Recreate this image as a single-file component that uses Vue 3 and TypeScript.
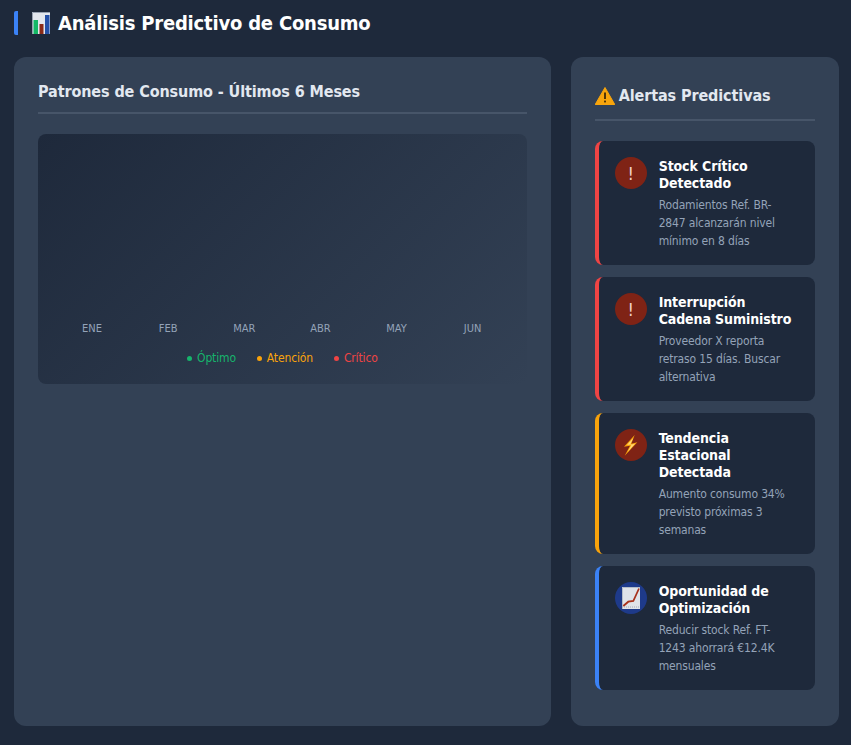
<script setup lang="ts">
interface Alert { title: string; desc: string; tone: 'crit' | 'warn' | 'info'; icon: 'bang' | 'bolt' | 'trend' }
const months: string[] = ['ENE', 'FEB', 'MAR', 'ABR', 'MAY', 'JUN']
const alerts: Alert[] = [
  { title: 'Stock Crítico Detectado', desc: 'Rodamientos Ref. BR-2847 alcanzarán nivel mínimo en 8 días', tone: 'crit', icon: 'bang' },
  { title: 'Interrupción Cadena Suministro', desc: 'Proveedor X reporta retraso 15 días. Buscar alternativa', tone: 'crit', icon: 'bang' },
  { title: 'Tendencia Estacional Detectada', desc: 'Aumento consumo 34% previsto próximas 3 semanas', tone: 'warn', icon: 'bolt' },
  { title: 'Oportunidad de Optimización', desc: 'Reducir stock Ref. FT-1243 ahorrará €12.4K mensuales', tone: 'info', icon: 'trend' },
]
</script>

<template>
  <div class="page">
    <h1 class="head">
      <svg class="emoji-chart" width="18" height="22" viewBox="0 0 18 22">
        <rect width="18" height="22" fill="#e3e7ee" />
        <path d="M.5 22V.5H18" fill="none" stroke="#98a2b2" />
        <rect x="1.5" y="8" width="4.5" height="14" fill="#14b866" />
        <rect x="7.5" y="12" width="4" height="10" fill="#8a2a17" />
        <rect x="13" y="3" width="4.5" height="19" fill="#2450a8" />
      </svg>
      <span>Análisis Predictivo de Consumo</span>
    </h1>
    <main class="grid">
      <section class="card">
        <h2 class="title">Patrones de Consumo - Últimos 6 Meses</h2>
        <div class="chart">
          <div class="months"><span v-for="m in months" :key="m">{{ m }}</span></div>
          <div class="legend">
            <span class="ok">Óptimo</span>
            <span class="att">Atención</span>
            <span class="bad">Crítico</span>
          </div>
        </div>
      </section>
      <aside class="card side">
        <h2 class="title alerts-title">
          <svg width="20" height="18" viewBox="0 0 20 18">
            <path d="M10 .5 19.8 17.5H.2Z" fill="#f8a50c" stroke="#f8a50c" stroke-linejoin="round" />
            <rect x="9.2" y="5.5" width="1.6" height="6.5" fill="#2a1c05" />
            <rect x="9.2" y="13.6" width="1.6" height="1.8" fill="#2a1c05" />
          </svg>
          <span>Alertas Predictivas</span>
        </h2>
        <div class="list">
          <article v-for="a in alerts" :key="a.title" class="alert" :class="a.tone">
            <div class="icon">
              <span v-if="a.icon === 'bang'">!</span>
              <svg v-else-if="a.icon === 'bolt'" width="14" height="21" viewBox="0 0 14 21">
                <path d="M10.7 0 0 11.7 6 10.7.7 20.7 13.3 7.3 7.3 8.7Z" fill="#f8a50c" />
                <path d="M9.2 3 3 10 7.8 9.3 3.6 17 11 8.8 6 10Z" fill="#ffd97a" />
              </svg>
              <svg v-else width="18" height="22" viewBox="0 0 18 22">
                <rect width="18" height="22" fill="#dfe3e9" />
                <path d="M.5 22V.5H18" fill="none" stroke="#b4bcc8" />
                <path d="M0 20H18" stroke="#a4acb9" stroke-dasharray="1 1" />
                <path d="M1.3 19 6.3 14.7 11.3 14 17 1.5" fill="none" stroke="#a8321c" stroke-width="1.8" />
              </svg>
            </div>
            <div class="body">
              <h3>{{ a.title }}</h3>
              <p>{{ a.desc }}</p>
            </div>
          </article>
        </div>
      </aside>
    </main>
  </div>
</template>

<style>
body { background: #1e293b; }
</style>

<style scoped>
.page {
  box-sizing: border-box;
  height: 745px;
  padding: 11px 12px 19px 14px;
  display: flex;
  flex-direction: column;
  gap: 22px;
  background: #1e293b;
  font-family: "DejaVu Sans Condensed", "DejaVu Sans", sans-serif;
  font-stretch: condensed;
}
.head {
  margin: 0;
  height: 24px;
  display: flex;
  align-items: center;
  gap: 8px;
  padding-left: 14px;
  border-left: 4px solid #3b82f6;
  border-radius: 2px;
  color: #fff;
  font-size: 20px;
  line-height: 24px;
  font-weight: 700;
  letter-spacing: -0.2px;
}
.grid {
  flex: 1;
  min-height: 0;
  display: grid;
  grid-template-columns: 2fr 1fr;
  grid-template-rows: minmax(0, 1fr);
  gap: 20px;
}
.card {
  background: #334155;
  border-radius: 12px;
  padding: 24px;
}
.side { padding-top: 28px; }
.title {
  margin: 0 0 20px;
  padding-bottom: 10px;
  border-bottom: 2px solid #475569;
  color: #e2e8f0;
  font-size: 16px;
  line-height: 21px;
  font-weight: 700;
  letter-spacing: -0.1px;
}
.alerts-title { display: flex; align-items: center; gap: 4px; padding-bottom: 13px; }
.chart {
  box-sizing: border-box;
  height: 250px;
  padding: 16px 16px 18px;
  border-radius: 8px;
  display: flex;
  flex-direction: column;
  justify-content: flex-end;
  background: linear-gradient(135deg, #1e293b, #334155);
}
.months {
  display: grid;
  grid-template-columns: repeat(6, 1fr);
  justify-items: center;
  color: #94a3b8;
  font-size: 11px;
  line-height: 13px;
  margin-bottom: 15px;
}
.legend {
  display: flex;
  justify-content: center;
  gap: 21px;
  font-size: 12px;
  line-height: 16px;
  letter-spacing: -0.15px;
}
.legend span { display: flex; align-items: center; gap: 5px; }
.legend span::before {
  content: "";
  width: 5px;
  height: 5px;
  border-radius: 50%;
  background: currentColor;
}
.ok { color: #16b46c; }
.att { color: #f9a30b; }
.bad { color: #ef4444; }
.list { display: flex; flex-direction: column; gap: 12px; }
.alert {
  display: flex;
  gap: 12px;
  padding: 17px 16px 15px;
  background: #1e293b;
  border-radius: 8px;
  border-left: 4px solid;
}
.alert.crit { border-color: #ef4444; }
.alert.warn { border-color: #f9a30b; }
.alert.info { border-color: #3b82f6; }
.icon {
  flex: none;
  width: 32px;
  height: 32px;
  margin-top: -1px;
  border-radius: 50%;
  display: flex;
  align-items: center;
  justify-content: center;
  background: #7f2315;
  color: #f1d0c8;
  font-size: 18px;
}
.alert.info .icon { background: #1e3a8a; }
.body { flex: 1; min-width: 0; }
h3 {
  margin: 0 0 4px;
  color: #fff;
  font-size: 14px;
  line-height: 17px;
  font-weight: 700;
  letter-spacing: -0.1px;
}
p {
  margin: 0;
  max-width: 134px;
  color: #94a3b8;
  font-size: 12px;
  line-height: 18px;
  letter-spacing: -0.15px;
}
</style>
